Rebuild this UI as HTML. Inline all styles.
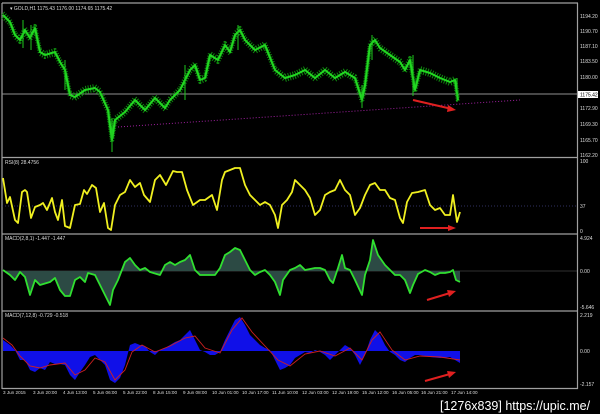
<!DOCTYPE html>
<html><head><meta charset="utf-8"><style>
html,body{margin:0;padding:0;background:#000;width:600px;height:414px;overflow:hidden}
svg{display:block}
text{font-family:"Liberation Sans",sans-serif;fill:#ddd}
</style></head><body>
<svg width="600" height="414" viewBox="0 0 600 414" xmlns="http://www.w3.org/2000/svg">
<defs>
<polyline id="pr" fill="none" stroke-linejoin="round" points="3,15 10,22 15,35 20,40 25,30 30,38 35,28 40,52 45,55 55,52 60,62 65,70 70,95 75,97 85,90 95,88 100,92 108,110 112,140 115,120 125,112 135,100 145,110 155,98 165,108 170,100 180,90 190,70 195,65 200,80 205,78 210,55 218,60 225,45 230,52 235,35 240,30 245,40 255,50 265,45 275,70 285,78 295,75 305,70 315,78 325,70 335,78 345,72 355,78 362,100 365,85 370,45 375,40 380,48 390,55 400,62 405,70 410,60 415,90 420,70 430,73 440,78 450,82 455,80 458,100"/>
</defs>
<rect width="600" height="414" fill="#000"/>
<g stroke="#a0a0a0" stroke-width="1.2" fill="none">
<line x1="2" y1="3" x2="578" y2="3"/>
<line x1="2" y1="3" x2="2" y2="389"/>
<line x1="577.5" y1="3" x2="577.5" y2="389"/>
<line x1="2" y1="157.5" x2="578" y2="157.5"/>
<line x1="2" y1="234" x2="578" y2="234"/>
<line x1="2" y1="311" x2="578" y2="311"/>
<line x1="2" y1="388.5" x2="578" y2="388.5"/>
</g>
<line x1="2" y1="94" x2="577" y2="94" stroke="#909090" stroke-width="1"/>
<line x1="118" y1="127" x2="520" y2="100" stroke="#a020a0" stroke-width="1" stroke-dasharray="1,2"/>
<use href="#pr" stroke="#0f8a0f" stroke-width="4" transform="translate(0,-2)" stroke-dasharray="1,1.5"/>
<use href="#pr" stroke="#0f8a0f" stroke-width="4" transform="translate(0,2)" stroke-dasharray="1,1.5"/>
<use href="#pr" stroke="#22d822" stroke-width="2"/>
<g stroke="#1ec81e" stroke-width="1">
<line x1="23" y1="20" x2="23" y2="48"/><line x1="31" y1="25" x2="31" y2="50"/><line x1="65" y1="60" x2="65" y2="90"/><line x1="112" y1="118" x2="112" y2="152"/><line x1="185" y1="65" x2="185" y2="100"/><line x1="238" y1="25" x2="238" y2="50"/><line x1="362" y1="85" x2="362" y2="108"/><line x1="372" y1="35" x2="372" y2="60"/><line x1="413" y1="55" x2="413" y2="96"/><line x1="457" y1="78" x2="457" y2="102"/>
</g>
<line x1="413" y1="100" x2="452" y2="109" stroke="#e02020" stroke-width="2"/>
<polygon points="456,110 448,105 447,112" fill="#e02020"/>
<text x="10" y="10" font-size="5">▾ GOLD,H1  1175.43 1176.00 1174.65 1175.42</text>
<line x1="2" y1="206" x2="577" y2="206" stroke="#404080" stroke-width="0.8" stroke-dasharray="1,2"/>
<polyline fill="none" stroke="#f0f020" stroke-width="1.8" stroke-linejoin="round" points="3,178 7,203 10,197 15,220 18,223 22,192 25,190 27,192 31,218 35,207 40,205 43,203 47,210 52,198 55,212 58,220 62,200 65,226 70,228 75,205 80,204 84,190 87,194 92,185 96,188 100,212 104,203 108,228 111,230 115,205 120,195 125,192 130,180 135,187 140,183 144,195 150,202 155,180 160,175 166,185 173,171 177,172 182,172 187,190 193,205 200,200 205,200 212,195 217,210 222,180 225,172 230,170 235,168 240,168 245,185 250,195 255,200 260,205 265,202 270,205 275,215 278,228 282,205 287,200 292,192 295,180 300,185 305,190 310,198 315,215 320,210 325,195 330,192 335,190 340,180 345,190 350,195 355,215 360,208 365,195 370,185 375,183 380,190 385,190 390,198 395,200 400,218 403,223 407,202 412,193 418,192 425,190 430,205 435,210 440,208 445,215 450,215 453,195 457,222 460,212"/>
<line x1="420" y1="228" x2="450" y2="228" stroke="#e02020" stroke-width="2"/>
<polygon points="456,228 448,225 448,231" fill="#e02020"/>
<text x="5" y="164" font-size="5">RSI(8) 28.4756</text>
<line x1="2" y1="271" x2="577" y2="271" stroke="#606060" stroke-width="0.6"/>
<polygon fill="#2c4a44" points="3,271 3,270 10,275 15,280 20,272 25,277 30,295 35,280 40,285 50,282 55,278 60,290 65,296 70,296 75,280 80,277 85,282 88,273 95,275 100,285 105,295 110,305 113,290 118,280 125,262 130,258 135,265 140,270 145,268 150,272 160,275 165,265 170,262 175,265 180,262 185,260 190,255 195,270 200,275 210,275 215,275 220,268 225,255 230,252 235,248 240,250 245,260 250,270 255,275 260,272 265,270 270,275 275,282 280,295 283,280 290,270 295,268 300,265 305,270 315,268 320,268 325,270 330,280 333,283 338,268 342,255 345,268 350,270 355,280 362,295 365,275 370,260 373,240 378,255 385,265 390,270 395,275 400,275 405,280 410,293 413,285 418,274 425,270 430,272 435,275 440,273 445,273 450,272 453,270 456,280 460,282 460,271"/>
<polyline fill="none" stroke="#30e030" stroke-width="1.8" stroke-linejoin="round" points="3,270 10,275 15,280 20,272 25,277 30,295 35,280 40,285 50,282 55,278 60,290 65,296 70,296 75,280 80,277 85,282 88,273 95,275 100,285 105,295 110,305 113,290 118,280 125,262 130,258 135,265 140,270 145,268 150,272 160,275 165,265 170,262 175,265 180,262 185,260 190,255 195,270 200,275 210,275 215,275 220,268 225,255 230,252 235,248 240,250 245,260 250,270 255,275 260,272 265,270 270,275 275,282 280,295 283,280 290,270 295,268 300,265 305,270 315,268 320,268 325,270 330,280 333,283 338,268 342,255 345,268 350,270 355,280 362,295 365,275 370,260 373,240 378,255 385,265 390,270 395,275 400,275 405,280 410,293 413,285 418,274 425,270 430,272 435,275 440,273 445,273 450,272 453,270 456,280 460,282"/>
<line x1="427" y1="300" x2="450" y2="293" stroke="#e02020" stroke-width="2"/>
<polygon points="456,291 447,290 449,297" fill="#e02020"/>
<text x="5" y="240" font-size="5">MACD(2,8,1) -1.447 -1.447</text>
<polygon fill="#1010e8" points="3,351 3,340 10,345 15,350 20,360 25,360 30,370 35,372 40,368 45,370 50,362 55,364 60,364 65,365 70,375 75,380 80,372 85,365 90,357 95,355 100,360 105,365 110,380 115,383 120,378 125,365 130,345 135,343 140,345 145,346 150,352 155,355 160,350 165,348 170,345 175,342 180,340 185,335 190,330 195,340 200,350 205,352 210,355 215,355 220,352 225,340 230,330 235,320 240,317 245,325 250,335 255,340 260,345 265,348 270,350 275,360 280,370 285,368 290,365 295,358 300,355 305,352 310,353 315,350 320,352 325,355 330,360 335,355 340,350 345,345 350,348 355,355 360,365 365,355 370,340 375,330 380,335 385,345 390,352 395,355 400,360 405,362 410,358 415,355 420,355 430,357 440,358 450,357 455,360 460,363 460,351"/>
<polyline fill="none" stroke="#d02020" stroke-width="0.9" points="3,338 12,345 20,356 30,366 40,368 50,365 65,363 75,375 85,370 95,358 105,362 115,380 125,370 132,352 142,345 155,352 170,346 185,338 195,336 205,348 220,353 232,330 242,318 252,332 265,346 278,360 290,366 305,354 320,351 335,356 350,348 362,360 372,340 380,332 392,350 405,360 420,356 440,357 460,360"/>
<line x1="425" y1="381" x2="450" y2="374" stroke="#e02020" stroke-width="2"/>
<polygon points="456,372 447,371 449,378" fill="#e02020"/>
<text x="5" y="317" font-size="5">MACD(7,12,8) -0.729 -0.518</text>
<g font-size="5">
<text x="580" y="18">1194.20</text><text x="580" y="33">1190.70</text><text x="580" y="48">1187.10</text><text x="580" y="63">1183.50</text><text x="580" y="79">1180.00</text><text x="580" y="110">1172.90</text><text x="580" y="126">1169.30</text><text x="580" y="142">1165.70</text><text x="580" y="157">1162.20</text>
<text x="580" y="163">100</text><text x="580" y="208">37</text><text x="580" y="233">0</text>
<text x="580" y="240">4.924</text><text x="580" y="273">0.00</text><text x="580" y="309">-5.646</text>
<text x="580" y="317">2.219</text><text x="580" y="353">0.00</text><text x="580" y="386">-2.157</text>
</g>
<rect x="578" y="91" width="20" height="7" fill="#fff"/>
<text x="580" y="96.5" font-size="5" style="fill:#000">1175.42</text>
<g font-size="4.6">
<text x="3" y="394">3 Jun 2015</text><text x="33" y="394">3 Jun 20:00</text><text x="63" y="394">4 Jun 13:00</text><text x="93" y="394">5 Jun 06:00</text><text x="123" y="394">5 Jun 22:00</text><text x="153" y="394">8 Jun 15:00</text><text x="183" y="394">9 Jun 08:00</text><text x="212" y="394">10 Jun 01:00</text><text x="242" y="394">10 Jun 17:00</text><text x="272" y="394">11 Jun 10:00</text><text x="302" y="394">12 Jun 03:00</text><text x="332" y="394">12 Jun 19:00</text><text x="362" y="394">15 Jun 12:00</text><text x="392" y="394">16 Jun 05:00</text><text x="421" y="394">16 Jun 21:00</text><text x="451" y="394">17 Jun 14:00</text>
</g>
<text x="440" y="410" font-size="12.5" style="fill:#fff">[1276x839] https://upic.me/</text>
</svg>
</body></html>
